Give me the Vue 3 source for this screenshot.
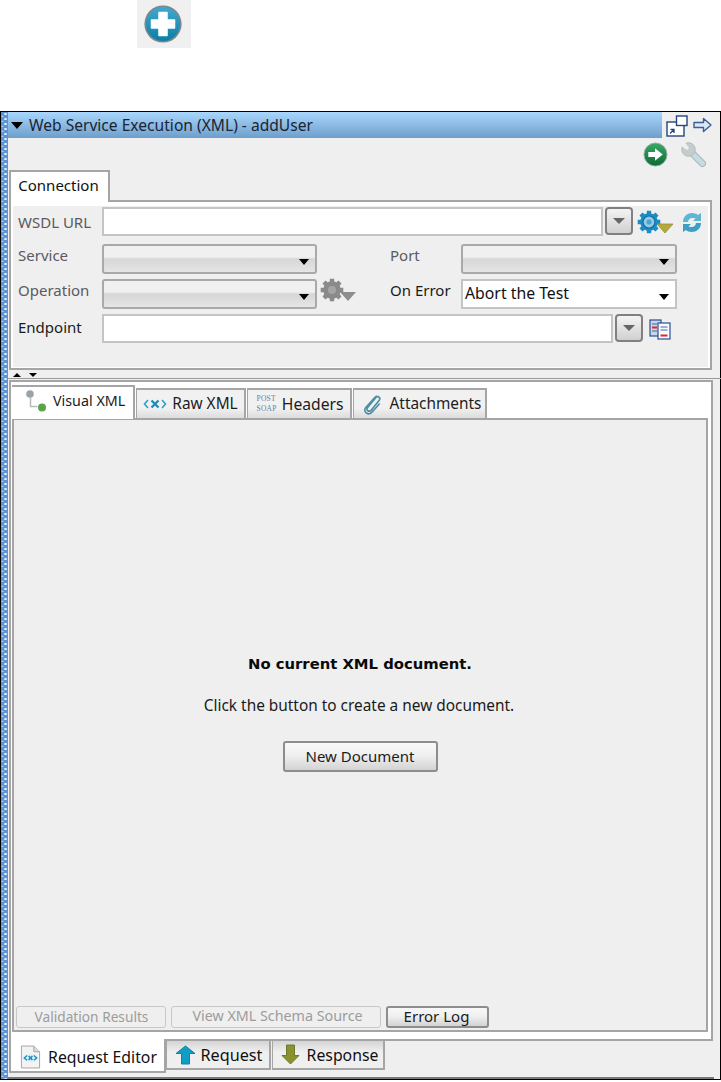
<script setup>
function gearPath(cx, cy, outer, inner, teeth) {
  const pts = []
  const step = (Math.PI * 2) / teeth
  for (let i = 0; i < teeth; i++) {
    const a = i * step - Math.PI / 2
    const w = step * 0.24
    const w2 = step * 0.34
    const p = (r, t) => `${(cx + r * Math.cos(t)).toFixed(2)} ${(cy + r * Math.sin(t)).toFixed(2)}`
    pts.push(p(inner, a - w2), p(outer, a - w), p(outer, a + w), p(inner, a + w2))
  }
  return 'M' + pts.join('L') + 'Z'
}
const gearBlue = gearPath(12, 12, 11.5, 8.8, 8)
const gearGray = gearPath(12, 12, 11.5, 8.8, 8)
const refreshHalf = 'M1 10C1 4 6 1 10 1c3 0 5 1 6 2l3-2v8h-8l2.500-2.500C12.500 6 11 6 10 6 8 6 6 8 6 10z'
const lowerTabs = [
  { label: 'Raw XML', icon: 'raw', width: 110, cls: 'tab-raw' },
  { label: 'Headers', icon: 'headers', width: 105, cls: 'tab-headers' },
  { label: 'Attachments', icon: 'clip', width: 134, cls: 'tab-clip' }
]
</script>

<template>
  <div class="page">
    <div class="top">
      <div class="plus-box">
        <svg width="38" height="38" viewBox="0 0 38 38">
          <defs>
            <linearGradient id="pg" x1="0" y1="0" x2="0" y2="1">
              <stop offset="0" stop-color="#3fa9cc" />
              <stop offset="1" stop-color="#0b7fa6" />
            </linearGradient>
          </defs>
          <circle cx="19" cy="19" r="18.600" fill="#54646c" opacity=".75" />
          <circle cx="19" cy="19" r="17" fill="url(#pg)" />
          <path d="M15 7.500h8v7.500h7.500v8H23v7.500h-8V23H7.500v-8H15z" fill="#fff" stroke="#fff" stroke-linejoin="round" stroke-width="1.500" />
        </svg>
      </div>
    </div>

    <div class="window">
      <div class="strip"></div>
      <div class="main">
        <div class="title-row">
          <div class="title-bar">
            <span class="tri-down"></span>
            <span>Web Service Execution (XML) - addUser</span>
          </div>
          <svg class="float-icon" width="22" height="22" viewBox="0 0 22 22">
            <rect x="1" y="7" width="17" height="14" fill="#fff" stroke="#23467f" stroke-width="1.400" />
            <rect x="10.500" y="1" width="10.500" height="9.500" fill="#fff" stroke="#23467f" stroke-width="1.400" />
            <path d="M4 18.500l4-4M4.500 14.500h3.500v3.500" fill="none" stroke="#23467f" stroke-width="1.300" />
          </svg>
          <svg class="arrow-icon" width="19" height="16" viewBox="0 0 19 16">
            <path d="M1 5.500h9.500V1.500L18 8l-7.500 6.500V10.500H1z" fill="#dbe6f5" stroke="#3d5c94" stroke-width="1.400" stroke-linejoin="round" />
          </svg>
        </div>

        <div class="toolbar">
          <svg width="25" height="25" viewBox="0 0 26 26">
            <defs>
              <linearGradient id="gg" x1="0" y1="0" x2="0" y2="1">
                <stop offset="0" stop-color="#3da868" />
                <stop offset="1" stop-color="#0b6b35" />
              </linearGradient>
            </defs>
            <circle cx="13" cy="13" r="12" fill="url(#gg)" stroke="#9bb3a5" />
            <path d="M5.500 10.500h7V6.500L20.500 13l-8 6.500v-4h-7z" fill="#fff" />
          </svg>
          <svg class="wrench" width="25" height="25" viewBox="0 0 25 25">
            <path d="M9 9 21.500 21.500" stroke="#a9b4b9" stroke-width="7" stroke-linecap="round" />
            <path d="M9 9 21.500 21.500" stroke="#c6dce5" stroke-width="5" stroke-linecap="round" />
            <circle cx="7.500" cy="7.500" r="6.800" fill="#c6cbce" stroke="#adb3b6" stroke-width=".8" />
            <path d="M-1 3 6 8 8 6 3-1z" fill="#efefef" />
          </svg>
        </div>

        <div class="conn-tabs">
          <div class="conn-tab">Connection</div>
        </div>
        <section class="conn-panel">
          <div class="row row-wsdl">
            <label class="lbl lbl-muted">WSDL URL</label>
            <div class="input input-wsdl"></div>
            <button class="drop-btn"><span class="gray-tri"></span></button>
            <svg class="gear" width="37" height="24" viewBox="0 0 37 24">
              <path :d="gearBlue" fill="#1c8cc4" />
              <circle cx="12" cy="12" r="6" fill="#8fcbe6" stroke="#156f9e" stroke-width="1.200" />
              <circle cx="12" cy="12" r="2.500" fill="#4aa5cc" />
              <path d="M20 14h16l-8 9z" fill="#b5a93c" stroke="#98913a" stroke-width=".8" />
            </svg>
            <svg class="refresh" width="20" height="21" viewBox="0 0 20 21">
              <path :d="refreshHalf" fill="#5db6d2" />
              <path :d="refreshHalf" fill="#3f9fc2" transform="rotate(180 10 10.500)" />
            </svg>
          </div>

          <div class="row row-service">
            <label class="lbl lbl-muted">Service</label>
            <div class="combo"><span class="black-tri"></span></div>
            <label class="lbl lbl-port lbl-muted">Port</label>
            <div class="combo combo-right"><span class="black-tri"></span></div>
          </div>

          <div class="row row-op">
            <label class="lbl lbl-muted">Operation</label>
            <div class="combo"><span class="black-tri"></span></div>
            <svg class="gear-off" width="37" height="25" viewBox="0 0 37 25">
              <path :d="gearGray" fill="#8a8a8a" />
              <circle cx="12" cy="12" r="4" fill="#a5a5a5" />
              <path d="M20 14h16l-8 9z" fill="#8e8e8e" />
            </svg>
            <label class="lbl lbl-onerror">On Error</label>
            <div class="combo combo-right combo-white">
              <span class="combo-text">Abort the Test</span>
              <span class="black-tri"></span>
            </div>
          </div>

          <div class="row row-end">
            <label class="lbl">Endpoint</label>
            <div class="input input-end"></div>
            <button class="drop-btn"><span class="gray-tri"></span></button>
            <svg class="copy-icon" width="22" height="21" viewBox="0 0 22 21">
              <rect x="1" y="1" width="11" height="16" fill="#c6d6ec" stroke="#2a4f8f" stroke-width="1.200" />
              <rect x="9" y="4" width="12" height="16" fill="#f8fbff" stroke="#2a4f8f" stroke-width="1.200" />
              <path d="M3 5h5M3 12h5M11.500 8h7M11.500 11h7" stroke="#45679f" stroke-width="1.200" />
              <path d="M3 8.500h5M11.500 16.500h7" stroke="#e7232f" stroke-width="1.800" />
            </svg>
          </div>
        </section>

        <div class="splitter">
          <span class="split-up"></span>
          <span class="split-down"></span>
        </div>

        <section class="xml-panel">
          <div class="xml-tabs">
            <div class="xml-tab xml-tab-on">
              <svg width="22" height="24" viewBox="0 0 22 24">
                <circle cx="5" cy="6" r="3.800" fill="#9aa4a8" />
                <path d="M5.500 10v8.500h7" fill="none" stroke="#b4bbbe" stroke-width="1.500" />
                <circle cx="17" cy="19.500" r="4" fill="#5aa447" />
              </svg>
              <span>Visual XML</span>
            </div>
            <div v-for="t in lowerTabs" :key="t.label" class="xml-tab" :class="t.cls" :style="{ width: t.width + 'px' }">
              <svg v-if="t.icon === 'raw'" width="24" height="12" viewBox="0 0 24 12">
                <path d="M5 2 1.500 6 5 10M19 2l3.500 4-3.500 4" fill="none" stroke="#2ba0c9" stroke-width="1.600" />
                <path d="M8.500 2.500l7 7M15.500 2.500l-7 7" stroke="#1c8fb9" stroke-width="2.400" />
              </svg>
              <span v-else-if="t.icon === 'headers'" class="post-soap">
                <span>POST</span>
                <span>SOAP</span>
              </span>
              <svg v-else width="20" height="22" viewBox="0 0 22 24">
                <path d="M16 4 6 16c-2 3 2 5 4 3L19 8c2-3-2-6-5-3L4 16c-3 5 3 9 7 5l8-9" fill="none" stroke="#4f8ea3" stroke-width="1.800" stroke-linecap="round" />
              </svg>
              <span>{{ t.label }}</span>
            </div>
          </div>
          <div class="xml-body">
            <div class="empty">
              <strong class="empty-title">No current XML document.</strong>
              <p class="empty-text">Click the button to create a new document.</p>
              <button class="btn new-doc">New Document</button>
            </div>
            <div class="actions">
              <button class="btn btn-off act-val">Validation Results</button>
              <button class="btn btn-off act-src">View XML Schema Source</button>
              <button class="btn act-log">Error Log</button>
            </div>
          </div>
        </section>

        <div class="bottom-tabs">
          <div class="b-tab b-tab-on">
            <svg width="21" height="24" viewBox="0 0 22 25">
              <path d="M1.500 1h13l6 6v17h-19z" fill="#f3f3f3" stroke="#a3a3a3" />
              <path d="M14.500 1v6h6" fill="#dcdcdc" stroke="#a3a3a3" />
              <ellipse cx="11" cy="13.500" rx="8" ry="4.500" fill="#dff0f8" />
              <path d="M7.500 11 4.500 13.500 7.500 16M14.500 11l3 2.500-3 2.500" fill="none" stroke="#1b8cbc" stroke-width="1.400" />
              <path d="M9 11.500l4 4M13 11.500l-4 4" stroke="#1b8cbc" stroke-width="1.600" />
            </svg>
            <span>Request Editor</span>
          </div>
          <div class="b-tab b-req">
            <svg width="21" height="20" viewBox="0 0 21 20">
              <path d="M10.500 1 20 8.500h-5.500V19h-8V8.500H1z" fill="#129dc4" stroke="#0d84a6" stroke-linejoin="round" />
            </svg>
            <span>Request</span>
          </div>
          <div class="b-tab b-res">
            <svg width="19" height="21" viewBox="0 0 19 21">
              <path d="M9.500 20 1 11.500h4.500V1h8v10.500H18z" fill="#8a9131" stroke="#72782a" stroke-linejoin="round" />
            </svg>
            <span>Response</span>
          </div>
        </div>
        <div class="status-line"></div>
      </div>
    </div>
  </div>
</template>

<style>
html, body { margin: 0; background: #fff; }
</style>

<style scoped>
.page {
  width: 721px;
  height: 1082px;
  overflow: hidden;
  background: #fff;
  font-family: "Noto Sans", "DejaVu Sans", sans-serif;
  font-size: 14px;
  color: #111;
  display: flex;
  flex-direction: column;
}
.top { height: 111px; flex: none; padding-left: 137px; box-sizing: border-box; }
.plus-box { width: 54px; height: 48px; background: #f0f0f0; display: flex; align-items: center; justify-content: center; padding-right: 2px; box-sizing: border-box; }

.window {
  height: 969px;
  flex: none;
  border: 1px solid #000;
  box-sizing: border-box;
  display: flex;
  background: #efefef;
}
.strip {
  width: 7px;
  flex: none;
  background-color: #5a93d6;
  background-image:
    radial-gradient(circle at 4.500px 2px, #e3effa 1px, transparent 1.400px),
    radial-gradient(circle at 1.500px 4.500px, #a9cbef 0.800px, transparent 1.200px);
  background-size: 7px 5px;
}
.main { width: 712px; flex: none; display: flex; flex-direction: column; }

.title-row { height: 27px; display: flex; align-items: flex-start; flex: none; }
.title-bar {
  width: 654px;
  height: 26px;
  box-sizing: border-box;
  background: linear-gradient(#a8d6fc, #6e9fcc);
  display: flex;
  align-items: center;
  gap: 6px;
  padding-left: 3px;
  color: #1c2433;
  font-size: 15.600px;
  line-height: 26px;
  flex: none;
}
.tri-down { width: 0; height: 0; border: 6.500px solid transparent; border-top: 7px solid #000; border-bottom: 0; }
.float-icon { margin: 3px 0 0 4px; flex: none; }
.arrow-icon { margin: 5px 0 0 5px; flex: none; }

.toolbar { height: 31px; flex: none; display: flex; justify-content: flex-end; align-items: flex-start; gap: 13px; padding-right: 14px; box-sizing: border-box; }
.toolbar svg { margin-top: 3px; }

.conn-tabs { height: 30px; flex: none; padding-left: 1px; }
.conn-tab {
  width: 101px; height: 32px; box-sizing: border-box;
  background: #fff;
  border: 2px solid #a5a5a5; border-bottom: 0;
  padding-right: 2px;
  text-align: center; line-height: 27px; font-size: 15px;
  position: relative; z-index: 1;
}
.conn-panel {
  height: 170px;
  flex: none;
  box-sizing: border-box;
  margin-left: 1px;
  width: 703px;
  border: 2px solid #a5a5a5;
  padding-top: 5px;
  background: #efefef;
  box-shadow: inset 2px 4px 0 #fff, inset -2px -1px 0 #fff;
}
.row { display: flex; align-items: flex-start; padding-left: 7px; }
.lbl { width: 84px; flex: none; font-size: 15px; color: #1a1a1a; line-height: 22px; }
.lbl-muted { color: #5a5a60; }
.row-wsdl { height: 37px; }
.row-wsdl .lbl { padding-top: 4px; }
.row-service { height: 35px; }
.row-op { height: 35px; }
.row-end { height: 30px; }
.row-end .lbl { line-height: 26px; }
.input { height: 29px; box-sizing: border-box; background: #fff; border: 2px solid #c4c4c4; flex: none; }
.input-wsdl { width: 501px; }
.input-end { width: 511px; }
.drop-btn {
  width: 28px; height: 28px; padding: 0; margin-left: 2px; flex: none;
  border: 2px solid #808080; border-radius: 4px;
  background: linear-gradient(#f4f4f4, #d0d0d0);
  display: flex; align-items: center; justify-content: center;
}
.gray-tri { width: 0; height: 0; border: 6px solid transparent; border-top: 6px solid #666; border-bottom: 0; }
.gear { margin: 3px 0 0 4px; flex: none; }
.refresh { margin: 5px 0 0 8px; flex: none; }
.combo {
  width: 215px; height: 30px; box-sizing: border-box;
  border: 2px solid #a9a9a9; border-radius: 3px;
  background: linear-gradient(#f0f0f0 0 42%, #d6d6d6 50%, #e5e5e5 100%);
  display: flex; align-items: center; justify-content: flex-end;
  padding: 6px 6.500px 0 0;
  flex: none;
}
.combo-right { width: 216px; }
.black-tri { width: 0; height: 0; border: 5.500px solid transparent; border-top: 6px solid #000; border-bottom: 0; }
.lbl-port { width: 71px; margin-left: 73px; }
.gear-off { margin: -1px 0 0 3px; flex: none; }
.lbl-onerror { width: 71px; margin-left: 33px; }
.combo-white { background: #fff; border-radius: 0; border-color: #c4c4c4; justify-content: space-between; padding: 0 6.500px 0 2px; }
.combo-white .black-tri { margin-top: 6px; }
.combo-text { font-size: 15.800px; line-height: 26px; margin-top: -2px; }
.copy-icon { margin: 5px 0 0 6px; flex: none; }

.splitter { height: 9px; flex: none; position: relative; box-sizing: border-box; border-bottom: 1px solid #9a9a9a; margin-right: -4px; }
.split-up, .split-down { position: absolute; top: 3px; width: 0; height: 0; border: 4.500px solid transparent; }
.split-up { left: 5px; border-top: 0; border-bottom: 4px solid #000; }
.split-down { left: 21px; border-bottom: 0; border-top: 4px solid #000; }

.xml-panel {
  margin: 1px 0 0 1px;
  width: 704px;
  height: 661px;
  flex: none;
  box-sizing: border-box;
  border: 2px solid #a5a5a5;
  background: #fff;
  padding: 3px 3px 7px 1px;
  display: flex;
  flex-direction: column;
}
.xml-tabs { display: flex; height: 33px; flex: none; align-items: flex-end; }
.xml-tab {
  height: 30px; box-sizing: border-box;
  display: flex; align-items: center; justify-content: center; gap: 5px;
  background: linear-gradient(#f1f1f1 0 65%, #dcdcdc);
  border: 2px solid #a5a5a5; border-bottom: 0; border-left-width: 1px;
  font-size: 15.400px; color: #1c1c1c;
  padding-bottom: 1px;
  margin-left: 1px;
  flex: none;
}
.xml-tab-on {
  width: 123px; height: 34px; background: #fff; margin-left: 0;
  border-left: 0; padding: 0 0 6px 13px; gap: 6px; justify-content: flex-start;
  font-size: 14.300px;
  position: relative; z-index: 1; margin-bottom: -1px;
}
.tab-headers { font-size: 15.700px; padding-left: 2px; }
.tab-clip { gap: 8px; padding-left: 4px; }
.post-soap { display: flex; flex-direction: column; font-family: "Liberation Serif", serif; font-size: 7.500px; line-height: 9.500px; color: #6b7ca8; letter-spacing: .3px; }
.xml-body {
  flex: 1;
  box-sizing: border-box;
  border: 2px solid #a5a5a5;
  background: #efefef;
  display: flex;
  flex-direction: column;
}
.empty { flex: 1; display: flex; flex-direction: column; align-items: center; padding-top: 234px; }
.empty-title { font-family: "DejaVu Sans", sans-serif; font-size: 14.800px; line-height: 20px; color: #0a0a0a; }
.empty-text { margin: 22px 2px 0 0; font-size: 15.400px; line-height: 20px; color: #1a1a1a; }
.btn {
  height: 31px; box-sizing: border-box;
  border: 2px solid #8d8d8d; border-radius: 3px;
  background: linear-gradient(#f8f8f8, #f0f0f0 45%, #d3d3d3);
  font: inherit; font-size: 15px; color: #1c1c1c;
  padding: 0; line-height: 1;
}
.new-doc { width: 155px; margin-top: 25px; }
.actions { display: flex; gap: 5px; padding: 0 0 2px 2px; flex: none; }
.actions .btn { height: 22px; padding-bottom: 1px; }
.btn-off { border-color: #c8c8c8; border-width: 1px; background: #efefef; color: #9c9c9c; }
.actions .act-val { width: 150px; font-size: 13.700px; padding-left: 1px; }
.actions .act-src { width: 210px; font-size: 14.300px; padding-left: 3px; }
.actions .act-log { width: 103px; font-size: 15px; padding-right: 2px; }

.bottom-tabs { flex: none; height: 36px; display: flex; align-items: flex-start; padding: 0 0 0 1px; box-sizing: border-box; }
.b-tab {
  height: 29px; box-sizing: border-box;
  display: flex; align-items: center; gap: 5px; justify-content: center;
  background: linear-gradient(#d4d4d4, #efefef 40%);
  border: 2px solid #a5a5a5; border-left-width: 1px; border-top: 0;
  font-size: 15.800px;
  flex: none;
}
.b-tab-on {
  width: 157px; height: 34px; margin-top: -2px; background: #fff;
  border-left: 2px solid #a5a5a5; border-top: 0; padding: 4px 0 0 2px; gap: 7px;
  position: relative; z-index: 1;
}
.b-req { width: 105px; font-size: 16.200px; padding-left: 1px; }
.b-res { width: 113px; margin-left: 1px; gap: 7px; padding-left: 3px; }
.status-line { height: 2px; flex: none; margin-right: 6px; background: #777; }
</style>
